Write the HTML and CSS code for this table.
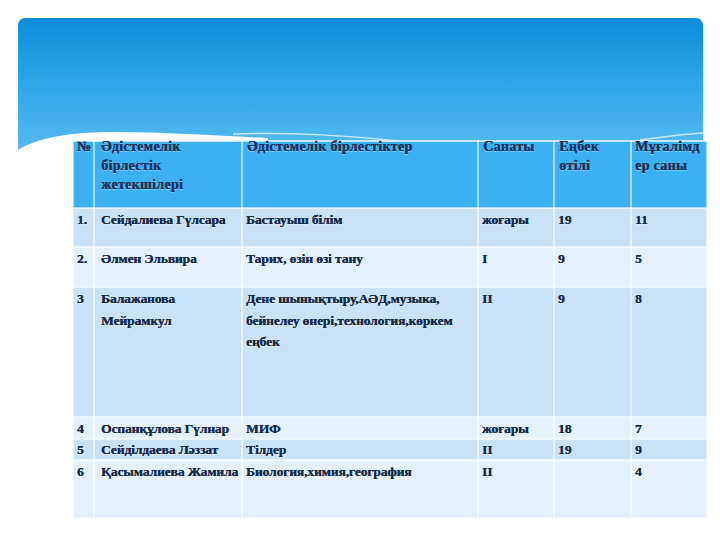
FILE: index.html
```html
<!DOCTYPE html>
<html>
<head>
<meta charset="utf-8">
<link rel="stylesheet" href="styles.css">
</head>
<body>
<div class="slide">
  <div class="panel">
    <svg class="wave" viewBox="0 0 685 132" preserveAspectRatio="none">
      <path d="M0 132 C22 118 60 114 95 114 C150 114 205 118 250 120 L250 132 Z" fill="#ffffff"/>
      <path d="M215 116 C280 114 330 118 380 123" stroke="#cdeafb" stroke-width="1.5" fill="none"/>
      <path d="M622 122 C645 119 665 116 685 115" stroke="#cdeafb" stroke-width="1.5" fill="none"/>
    </svg>
  </div>
  <table class="grid">
    <colgroup>
      <col class="c1"><col class="c2"><col class="c3"><col class="c4"><col class="c5"><col class="c6">
    </colgroup>
    <tr class="head">
      <td><div class="h">№</div></td>
      <td><div class="h">Әдістемелік бірлестік жетекшілері</div></td>
      <td><div class="h">Әдістемелік бірлестіктер</div></td>
      <td><div class="h">Санаты</div></td>
      <td><div class="h">Еңбек өтілі</div></td>
      <td class="brk"><div class="h">Мұғалімдер саны</div></td>
    </tr>
    <tr class="odd r1">
      <td>1.</td><td>Сейдалиева Гүлсара</td><td>Бастауыш білім</td><td>жоғары</td><td>19</td><td>11</td>
    </tr>
    <tr class="even r2">
      <td>2.</td><td>Әлмен Эльвира</td><td>Тарих, өзін өзі тану</td><td>I</td><td>9</td><td>5</td>
    </tr>
    <tr class="odd r3">
      <td>3</td><td>Балажанова Мейрамкул</td><td>Дене шынықтыру,АӘД,музыка, бейнелеу өнері,технология,көркем еңбек</td><td>II</td><td>9</td><td>8</td>
    </tr>
    <tr class="even r4">
      <td>4</td><td>Оспанқұлова Гүлнар</td><td>МИФ</td><td>жоғары</td><td>18</td><td>7</td>
    </tr>
    <tr class="odd r5">
      <td>5</td><td>Сейділдаева Ләззат</td><td>Тілдер</td><td>II</td><td>19</td><td>9</td>
    </tr>
    <tr class="even r6">
      <td>6</td><td>Қасымалиева Жамила</td><td>Биология,химия,география</td><td>II</td><td></td><td>4</td>
    </tr>
  </table>
</div>
</body>
</html>
```
FILE: styles.css
```css
html, body {
  margin: 0;
  padding: 0;
  background: #ffffff;
}
.slide {
  width: 720px;
  height: 540px;
  padding: 18px 0 0 18px;
  box-sizing: border-box;
}
.panel {
  position: relative;
  width: 685px;
  height: 132px;
  border-radius: 7px 7px 0 0;
  background: linear-gradient(to bottom, #0b8edb 0%, #2fa6e8 50%, #56baf0 100%);
  overflow: hidden;
}
.wave {
  position: absolute;
  left: 0;
  top: 0;
  width: 685px;
  height: 132px;
}
.grid {
  position: relative;
  margin: -10px 0 0 54px;
  width: 634px;
  border-collapse: collapse;
  table-layout: fixed;
  font-family: "Liberation Serif", "Times New Roman", serif;
  font-weight: bold;
  font-size: 13.5px;
  line-height: 19px;
  letter-spacing: -0.1px;
  color: #152c4c;
}
.c1 { width: 21px; }
.c2 { width: 148px; }
.c3 { width: 236px; }
.c4 { width: 76px; }
.c5 { width: 77px; }
.c6 { width: 76px; }
.grid td {
  vertical-align: top;
  padding: 3px 1px 0 3px;
  border: 2px solid rgba(255, 255, 255, 0.55);
  text-shadow: 0.3px 0 0 #152c4c, 0 1px 1px rgba(255, 255, 255, 0.45);
}
.grid td:nth-child(2) { padding-left: 6px; }
.grid td:first-child {
  padding-left: 3px;
  padding-right: 0;
}
.grid tr:first-child td { border-top-color: rgba(230, 245, 255, 0.8); }
.head td {
  background: #3bb1f1;
  height: 65px;
  padding: 0 4px 0 4px;
  font-size: 14px;
  letter-spacing: 0.3px;
  color: #173561;
  text-shadow: 0.4px 0 0 #173561, 0 1px 1px rgba(180, 225, 255, 0.6);
}
.head td:nth-child(2) { padding: 0 7px 0 6px; }
.head td:first-child { padding: 0 0 0 3px; letter-spacing: 0; }
.head td.brk { padding: 0 2px 0 3px; overflow-wrap: anywhere; word-break: break-all; }
.h { margin-top: -5px; }
.odd td { background: #c9e2f8; }
.even td { background: #e4f0fb; }
.r1 td { height: 36px; padding-top: 1px; }
.r2 td { height: 37px; padding-top: 1px; }
.r3 td { height: 128px; padding-top: 0; line-height: 21.5px; }
.r4 td { height: 19px; padding-top: 1px; }
.r5 td { height: 17px; padding-top: 0; }
.r6 td { height: 55px; padding-top: 1px; }
```
